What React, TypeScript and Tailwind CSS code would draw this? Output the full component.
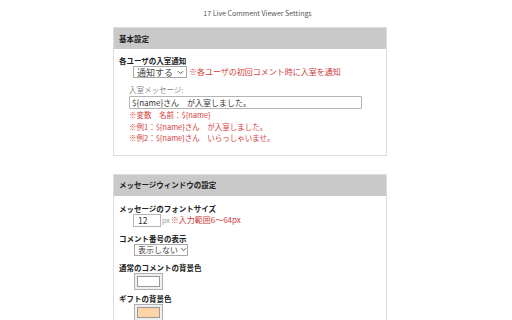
import React from "react";

const font = { fontFamily: '"Noto Sans CJK JP", "Noto Sans", sans-serif' };

function Chevron() {
  return (
    <svg width="7" height="5" viewBox="0 0 7 5" className="shrink-0">
      <path d="M1 1.2 L3.5 3.7 L6 1.2" fill="none" stroke="#555" strokeWidth="1" />
    </svg>
  );
}

function Select({ label, className }: { label: string; className: string }) {
  return (
    <div
      className={`flex h-[12px] items-center justify-between gap-[2px] whitespace-nowrap border border-[#a8a8a8] bg-white pl-[3px] pr-[2px] leading-none text-[#444] ${className}`}
    >
      <span>{label}</span>
      <Chevron />
    </div>
  );
}

function ColorBox({ color }: { color: string }) {
  return (
    <div className="flex h-[17px] w-[29px] items-center justify-center border border-[#b0b0b0] bg-[#efefef]">
      <div className="h-[11px] w-[23px] border border-[#999]" style={{ background: color }} />
    </div>
  );
}

function Card({ title, children }: { title: string; children: React.ReactNode }) {
  return (
    <div className="ml-[113px] w-[274px] border border-[#dedede] bg-white">
      <div className="flex h-[21px] items-center bg-[#c9c9c9] px-[5px] text-[7.5px] font-bold text-[#222]">
        {title}
      </div>
      {children}
    </div>
  );
}

export default function App() {
  return (
    <div className="h-[320px] w-[512px] overflow-hidden bg-white" style={font}>
      <div className="flex h-[27px] items-center justify-center pl-[3px] text-[7px] text-[#555]">
        17 Live Comment Viewer Settings
      </div>

      <Card title="基本設定">
        <div className="px-[5px] pb-[11px] pt-[6px]">
          <div className="h-[11px] text-[7.5px] font-bold leading-[11px] text-[#222]">各ユーザの入室通知</div>
          <div className="flex items-center gap-[2px] pl-[14px]">
            <Select label="通知する" className="w-[54px] text-[9px]" />
            <span className="text-[8px] leading-[12px] text-[#d03c3c]">※各ユーザの初回コメント時に入室を通知</span>
          </div>
          <div className="pl-[10px] pt-[6px]">
            <div className="h-[11px] text-[7.5px] leading-[11px] text-[#888]">入室メッセージ:</div>
            <div className="mt-[1px] flex h-[13px] w-[233px] items-center rounded-[1px] border border-[#b4b4b4] px-[2px] text-[8px] text-[#333]">
              ${"{name}"}さん　が入室しました。
            </div>
            <div className="text-[7.5px] leading-[11.5px] text-[#d03c3c]">
              <div>※変数　名前：${"{name}"}</div>
              <div>※例1：${"{name}"}さん　が入室しました。</div>
              <div>※例2：${"{name}"}さん　いらっしゃいませ。</div>
            </div>
          </div>
        </div>
      </Card>

      <div className="h-[18px]" />

      <Card title="メッセージウィンドウの設定">
        <div className="px-[5px] pt-[7px]">
          <div className="h-[11px] text-[7.5px] font-bold leading-[11px] text-[#222]">メッセージのフォントサイズ</div>
          <div className="flex items-center gap-[1px] pl-[14px]">
            <div className="flex h-[13px] w-[28px] items-center border border-[#b4b4b4] px-[4px] text-[8.5px] text-[#333]">12</div>
            <span className="text-[7px] leading-[12px] text-[#999]">px</span>
            <span className="text-[8px] leading-[12px] text-[#d03c3c]">※入力範囲6～64px</span>
          </div>
          <div className="mt-[6px] h-[11px] text-[7.5px] font-bold leading-[11px] text-[#222]">コメント番号の表示</div>
          <div className="pl-[15px]">
            <Select label="表示しない" className="w-[54px] text-[8px]" />
          </div>
          <div className="mt-[6px] h-[11px] text-[7.5px] font-bold leading-[11px] text-[#222]">通常のコメントの背景色</div>
          <div className="pl-[15px]">
            <ColorBox color="#ffffff" />
          </div>
          <div className="mt-[3px] h-[11px] text-[7.5px] font-bold leading-[11px] text-[#222]">ギフトの背景色</div>
          <div className="pl-[15px]">
            <ColorBox color="#ffd5a8" />
          </div>
        </div>
      </Card>
    </div>
  );
}
